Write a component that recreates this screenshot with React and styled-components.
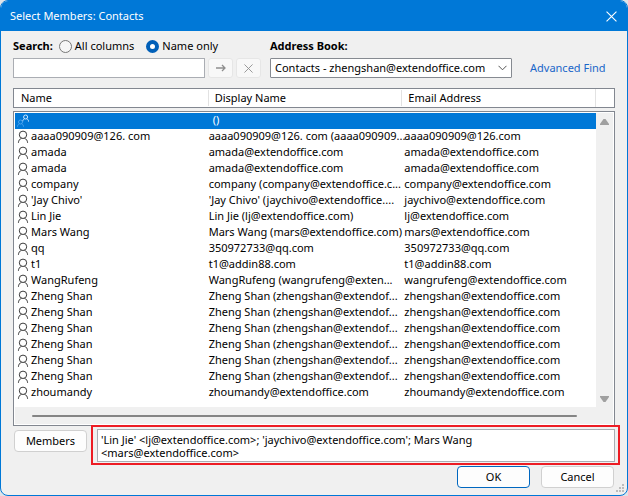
import React from "react";
import styled, { createGlobalStyle, css } from "styled-components";

const Global = createGlobalStyle`
  *, *::before, *::after { box-sizing: border-box; }
  body { margin: 0; background: #dfe3e8; }
  body, button, input, select, textarea {
    font-family: "Noto Sans", "Open Sans", sans-serif;
    font-size: 11px;
    line-height: 16px;
    color: #000;
  }
`;

const Dialog = styled.main`
  display: flex;
  flex-direction: column;
  min-height: 100vh;
  background: #f0f0f0;
  border: 1px solid #0078d7;
  border-radius: 8px;
  overflow: hidden;
  position: relative;
`;

const TitleBar = styled.header`
  display: flex;
  align-items: center;
  justify-content: space-between;
  height: 30px;
  padding: 0 9px;
  background: #0078d7;
  color: #fff;
`;

const Title = styled.h1`
  margin: 0;
  font-size: 11px;
  font-weight: 400;
`;

const CloseButton = styled.button`
  display: grid;
  place-items: center;
  width: 13px;
  height: 16px;
  padding: 0;
  border: 0;
  background: none;
  color: #fff;
`;

const SearchArea = styled.form`
  display: grid;
  grid-template-columns: 257px 1fr;
  row-gap: 4px;
  padding: 7px 12px 10px;
`;

const Line = styled.div`
  display: flex;
  align-items: center;
  gap: ${(p) => p.$gap || 0}px;
`;

const Caption = styled.label`
  font-weight: 700;
`;

const RadioGroup = styled.div`
  display: flex;
  gap: 12px;
  margin-left: 6px;
`;

const RadioLabel = styled.label`
  display: flex;
  align-items: center;
  gap: 3px;
`;

const Radio = styled.input`
  appearance: none;
  width: 13px;
  height: 13px;
  margin: 0;
  border: 1px solid #777;
  border-radius: 50%;
  background: #f6f6f6;
  &:checked {
    border: 4px solid #005fb8;
    background: #fff;
  }
`;

const SearchInput = styled.input`
  width: 192px;
  height: 20px;
  padding: 0 4px;
  border: 1px solid #aaadb3;
  border-radius: 0;
  background: #fff;
`;

const ToolButton = styled.button`
  display: grid;
  place-items: center;
  width: 25px;
  height: 20px;
  margin-left: 3px;
  padding: 0;
  border: 1px solid #e6e6e6;
  border-radius: 3px;
  background: #f8f8f8;
  color: #8e8e8e;
`;

const SelectWrap = styled.div`
  display: flex;
  align-items: center;
  position: relative;
  width: 242px;
  svg {
    position: absolute;
    right: 5px;
    pointer-events: none;
  }
`;

const Select = styled.select`
  appearance: none;
  width: 100%;
  height: 20px;
  padding: 0 20px 0 4px;
  border: 1px solid #868a91;
  border-radius: 1px;
  background: #fff;
`;

const Link = styled.a`
  color: #1a66c9;
  text-decoration: none;
`;

const HeaderTable = styled.table`
  display: block;
  margin: 0 12px 3px;
  padding-right: 18px;
  border: 1px solid #828790;
  background: #fff;
  thead { display: block; }
`;

const columns = css`
  display: grid;
  grid-template-columns: repeat(3, 1fr);
`;

const HeaderRow = styled.tr`
  ${columns}
  padding: 1px 0;
  border-right: 1px solid #e2e2e2;
`;

const HeaderCell = styled.th`
  padding: 0 7px;
  font-weight: 400;
  text-align: left;
  & + & {
    padding-left: 6px;
    border-left: 1px solid #e2e2e2;
  }
`;

const ListBox = styled.section`
  display: grid;
  grid-template-columns: 1fr 17px;
  grid-template-rows: 1fr 17px;
  flex: 1;
  margin: 0 12px -1px;
  padding: 1px;
  border: 1px solid #828790;
  background: #fff;
`;

const ListTable = styled.table`
  display: block;
  tbody { display: block; }
`;

const Row = styled.tr`
  ${columns}
  height: 16px;
  line-height: 14px;
  background: ${(p) => (p.$selected ? "#0078d7" : "#fff")};
  color: ${(p) => (p.$selected ? "#fff" : "#000")};
`;

const Cell = styled.td`
  display: flex;
  align-items: center;
  gap: 2px;
  min-width: 0;
  padding: 0 0 2px ${(p) => p.$pad}px;
  white-space: nowrap;
`;

const VerticalBar = styled.div`
  display: flex;
  flex-direction: column;
  justify-content: space-between;
  align-items: center;
  padding: 6px 0 5px;
  background: #f0f0f0;
`;

const HorizontalBar = styled.div`
  display: flex;
  grid-column: 1 / -1;
  align-items: center;
  padding: 0 36px 0 17px;
  background: #f0f0f0;
`;

const Thumb = styled.div`
  flex: 1;
  height: 2px;
  border-radius: 1px;
  background: #858585;
`;

const MembersRow = styled.div`
  display: flex;
  align-items: flex-start;
  gap: 4px;
  padding: 0 7px 0 13px;
`;

const PushButton = styled.button`
  width: 73px;
  height: 22px;
  margin-top: ${(p) => p.$top || 0}px;
  padding: 0;
  border: 1px solid ${(p) => (p.$primary ? "#0067c0" : "#d0d0d0")};
  border-radius: 4px;
  background: #fdfdfd;
`;

const Highlight = styled.div`
  display: flex;
  flex: 1;
  position: relative;
  padding: 2px 3px 1px 4px;
  border: 2px solid #ed1c24;
  background: #f0f0f0;
`;

const MembersField = styled.textarea`
  flex: 1;
  height: 33px;
  padding: 3px;
  border: 1px solid #aaadb3;
  border-radius: 0;
  background: #fff;
  line-height: 13px;
  resize: none;
  overflow: hidden;
`;

const Footer = styled.footer`
  display: flex;
  justify-content: flex-end;
  gap: 11px;
  padding: 1px 13px 7px;
`;

const Grip = styled.svg`
  position: absolute;
  right: 2px;
  bottom: 2px;
`;

const Person = () => (
  <svg width="12" height="14" viewBox="0 0 12 14" fill="none" stroke="#3c3c3c" aria-hidden="true">
    <circle cx="6" cy="5.8" r="3.7" />
    <path d="M1.4 13.8c.1-2.2 1.3-3.9 3.2-4.5M10.6 13.8c-.1-2.2-1.3-3.9-3.2-4.5" />
  </svg>
);

const Group = () => (
  <svg width="12" height="14" viewBox="0 0 12 14" fill="none" aria-hidden="true">
    <g stroke="#d5eaff">
      <circle cx="8.6" cy="4" r="2" />
      <path d="M5.6 8.6c.1-1.5.8-2.3 1.8-2.7M11.6 8.6c-.1-1.5-.8-2.3-1.8-2.7" />
    </g>
    <g stroke="#4ba3ee">
      <circle cx="3.5" cy="9" r="2" />
      <path d="M.5 13.6c.1-1.5.8-2.3 1.8-2.7M6.5 13.6c-.1-1.5-.8-2.3-1.8-2.7" />
    </g>
  </svg>
);

const Cross = ({ size }) => (
  <svg width={size} height={size} viewBox="0 0 10 10" fill="none" stroke="currentColor" aria-hidden="true">
    <path d="M.5.5l9 9M9.5.5l-9 9" />
  </svg>
);

const zheng = ["Zheng Shan", "Zheng Shan (zhengshan@extendof...", "zhengshan@extendoffice.com"];

const contacts = [
  ["aaaa090909@126. com", "aaaa090909@126. com (aaaa090909...", "aaaa090909@126.com"],
  ["amada", "amada@extendoffice.com", "amada@extendoffice.com"],
  ["amada", "amada@extendoffice.com", "amada@extendoffice.com"],
  ["company", "company (company@extendoffice.c...", "company@extendoffice.com"],
  ["'Jay Chivo'", "'Jay Chivo' (jaychivo@extendoffice....", "jaychivo@extendoffice.com"],
  ["Lin Jie", "Lin Jie (lj@extendoffice.com)", "lj@extendoffice.com"],
  ["Mars Wang", "Mars Wang (mars@extendoffice.com)", "mars@extendoffice.com"],
  ["qq", "350972733@qq.com", "350972733@qq.com"],
  ["t1", "t1@addin88.com", "t1@addin88.com"],
  ["WangRufeng", "WangRufeng (wangrufeng@exten...", "wangrufeng@extendoffice.com"],
  zheng, zheng, zheng, zheng, zheng, zheng,
  ["zhoumandy", "zhoumandy@extendoffice.com", "zhoumandy@extendoffice.com"],
];

export default function App() {
  return (
    <>
      <Global />
      <Dialog>
        <TitleBar>
          <Title>Select Members: Contacts</Title>
          <CloseButton aria-label="Close"><Cross size={11} /></CloseButton>
        </TitleBar>

        <SearchArea onSubmit={(e) => e.preventDefault()}>
          <Line>
            <Caption htmlFor="search">Search:</Caption>
            <RadioGroup>
              <RadioLabel><Radio type="radio" name="scope" />All columns</RadioLabel>
              <RadioLabel><Radio type="radio" name="scope" defaultChecked />Name only</RadioLabel>
            </RadioGroup>
          </Line>
          <Line>
            <Caption htmlFor="book">Address Book:</Caption>
          </Line>
          <Line>
            <SearchInput id="search" type="text" />
            <ToolButton type="submit" aria-label="Go">
              <svg width="10" height="8" viewBox="0 0 10 8" fill="none" stroke="currentColor" strokeWidth="1.3" aria-hidden="true">
                <path d="M0 4h9M6 1l3 3-3 3" />
              </svg>
            </ToolButton>
            <ToolButton type="reset" aria-label="Clear"><Cross size={9} /></ToolButton>
          </Line>
          <Line $gap={18}>
            <SelectWrap>
              <Select id="book">
                <option>Contacts - zhengshan@extendoffice.com</option>
              </Select>
              <svg width="9" height="6" viewBox="0 0 9 6" fill="none" stroke="#555" aria-hidden="true">
                <path d="M.5.8l4 4 4-4" />
              </svg>
            </SelectWrap>
            <Link href="#advanced">Advanced Find</Link>
          </Line>
        </SearchArea>

        <HeaderTable>
          <thead>
            <HeaderRow>
              <HeaderCell scope="col">Name</HeaderCell>
              <HeaderCell scope="col">Display Name</HeaderCell>
              <HeaderCell scope="col">Email Address</HeaderCell>
            </HeaderRow>
          </thead>
        </HeaderTable>

        <ListBox>
          <ListTable aria-label="Contacts">
            <tbody>
              <Row $selected>
                <Cell $pad={2}><Group /></Cell>
                <Cell $pad={4}>()</Cell>
                <Cell $pad={2} />
              </Row>
              {contacts.map(([name, display, email], i) => (
                <Row key={i}>
                  <Cell $pad={2}><Person />{name}</Cell>
                  <Cell $pad={0}>{display}</Cell>
                  <Cell $pad={2}>{email}</Cell>
                </Row>
              ))}
            </tbody>
          </ListTable>
          <VerticalBar>
            <svg width="9" height="6" viewBox="0 0 9 6" fill="#a0a0a0" aria-hidden="true"><path d="M3.5 0h2L9 5v1H0V5z" /></svg>
            <svg width="9" height="6" viewBox="0 0 9 6" fill="#a0a0a0" aria-hidden="true"><path d="M3.5 6h2L9 1V0H0v1z" /></svg>
          </VerticalBar>
          <HorizontalBar><Thumb /></HorizontalBar>
        </ListBox>

        <MembersRow>
          <PushButton $top={5}>Members</PushButton>
          <Highlight>
            <MembersField
              aria-label="Members"
              defaultValue={"'Lin Jie' <lj@extendoffice.com>; 'jaychivo@extendoffice.com'; Mars Wang\n<mars@extendoffice.com>"}
            />
          </Highlight>
        </MembersRow>

        <Footer>
          <PushButton $primary>OK</PushButton>
          <PushButton>Cancel</PushButton>
        </Footer>
        <Grip width="9" height="9" viewBox="0 0 9 9" fill="#bcbcbc" aria-hidden="true">
          <path d="M6 0h2v2H6zM3 3h2v2H3zM6 3h2v2H6zM0 6h2v2H0zM3 6h2v2H3zM6 6h2v2H6z" />
        </Grip>
      </Dialog>
    </>
  );
}
